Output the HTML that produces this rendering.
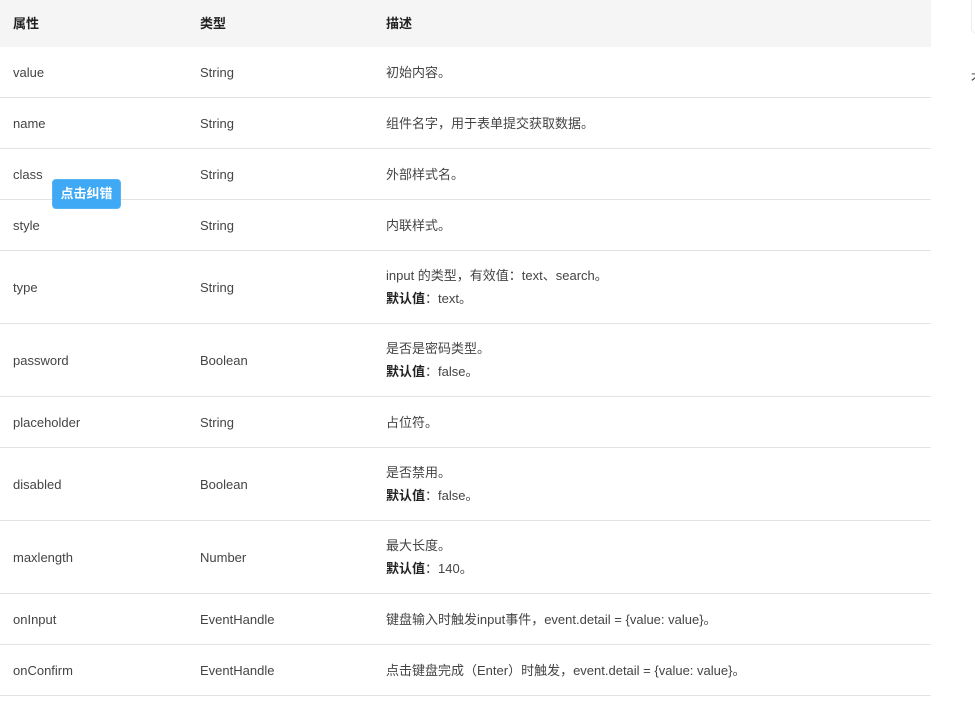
<!DOCTYPE html>
<html><head><meta charset="utf-8"><style>
body{margin:0;width:975px;height:711px;overflow:hidden;background:#fff;font-family:"Liberation Sans","Noto Sans CJK SC",sans-serif;font-size:13px;color:#333;position:relative}
table{position:absolute;left:0;top:0;width:931px;border-collapse:collapse}
td,th{padding:0;text-align:left;vertical-align:middle;line-height:23px}
th{background:#f5f5f5;height:47px;font-weight:bold;color:#222}
td{border-bottom:1px solid #e2e2e2;color:#444}
td:nth-child(1),th:nth-child(1){padding-left:13px;width:187px}
td:nth-child(2),th:nth-child(2){width:186px}
tr.s td{height:50px}
tr.d td{height:72px}
b{color:#222}
.btn{position:absolute;left:52px;top:179px;width:69px;height:30px;background:#3fa9f5;border:1px solid #56b3f5;box-sizing:border-box;border-radius:4px;color:#fff;font-weight:bold;font-size:13px;text-align:center;line-height:28px}
.box{position:absolute;left:971px;top:-5px;width:30px;height:37px;border:1px solid #eee;border-radius:6px}
.g{position:absolute;left:971px;top:68px;font-size:12px;color:#333}
</style></head><body>
<table>
<tr><th>属性</th><th>类型</th><th>描述</th></tr>
<tr class="s"><td>value</td><td>String</td><td>初始内容。</td></tr>
<tr class="s"><td>name</td><td>String</td><td>组件名字，用于表单提交获取数据。</td></tr>
<tr class="s"><td>class</td><td>String</td><td>外部样式名。</td></tr>
<tr class="s"><td>style</td><td>String</td><td>内联样式。</td></tr>
<tr class="d"><td>type</td><td>String</td><td>input 的类型，有效值：text、search。<br><b>默认值</b>：text。</td></tr>
<tr class="d"><td>password</td><td>Boolean</td><td>是否是密码类型。<br><b>默认值</b>：false。</td></tr>
<tr class="s"><td>placeholder</td><td>String</td><td>占位符。</td></tr>
<tr class="d"><td>disabled</td><td>Boolean</td><td>是否禁用。<br><b>默认值</b>：false。</td></tr>
<tr class="d"><td>maxlength</td><td>Number</td><td>最大长度。<br><b>默认值</b>：140。</td></tr>
<tr class="s"><td>onInput</td><td>EventHandle</td><td>键盘输入时触发input事件，event.detail = {value: value}。</td></tr>
<tr class="s"><td>onConfirm</td><td>EventHandle</td><td>点击键盘完成（Enter）时触发，event.detail = {value: value}。</td></tr>
</table>
<div class="btn">点击纠错</div>
<div class="box"></div>
<div class="g">才</div>
</body></html>
